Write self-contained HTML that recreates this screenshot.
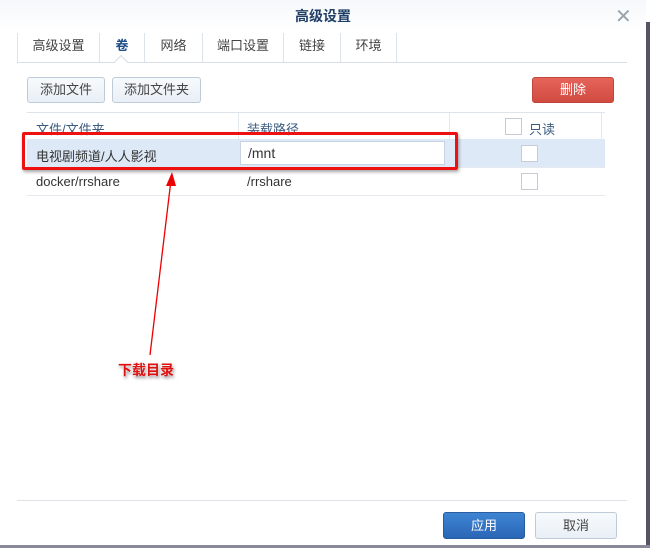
<!DOCTYPE html>
<html><head><meta charset="utf-8"><style>
*{margin:0;padding:0;box-sizing:border-box}
body{width:650px;height:548px;background:#fff;font-family:"Liberation Sans","Noto Sans CJK SC",sans-serif;font-size:13px;color:#333;position:relative;overflow:hidden}
.abs{position:absolute}
.title{left:0;top:0;width:646px;height:33px;background:linear-gradient(#f6f8fb,#fff);text-align:center;line-height:33px;color:#1f3f66;font-size:14px;font-weight:bold}
.tab{top:33px;height:30px;line-height:26px;color:#444;text-align:center;border-left:1px solid #dde3ea}
.btn{border:1px solid #bfcbd8;border-radius:3px;background:linear-gradient(#f7fafd,#e9eff6);text-align:center;line-height:24px;color:#444}
.hl{background:#dde9f6}
.cb{width:17px;height:17px;border:1px solid #c6ccd3;background:#fff}
</style></head><body>
<div class="abs title">高级设置</div>
<div class="abs" style="left:615px;top:4px;font-size:20px;color:#9aa4ad;font-weight:normal">✕</div>
<div class="abs" style="left:646px;top:22px;width:4px;height:526px;background:#556"></div>
<div class="abs" style="left:0;top:545px;width:650px;height:3px;background:#889"></div>
<div class="abs tab" style="left:17px;width:82px">高级设置</div>
<div class="abs tab" style="left:99px;width:45px;color:#1f4f88;font-weight:bold">卷</div>
<div class="abs tab" style="left:144px;width:58px">网络</div>
<div class="abs tab" style="left:202px;width:81px">端口设置</div>
<div class="abs tab" style="left:283px;width:57px">链接</div>
<div class="abs tab" style="left:340px;width:57px;border-right:1px solid #dde3ea">环境</div>
<div class="abs" style="left:17px;top:62px;width:610px;height:1px;background:#d6dde5"></div>
<div class="abs" style="left:116px;top:57px;width:10px;height:10px;background:#fff;border-left:1px solid #d6dde5;border-top:1px solid #d6dde5;transform:rotate(45deg)"></div>
<div class="abs btn" style="left:27px;top:77px;width:78px;height:26px">添加文件</div>
<div class="abs btn" style="left:112px;top:77px;width:89px;height:26px">添加文件夹</div>
<div class="abs" style="left:532px;top:77px;width:82px;height:26px;border-radius:3px;background:linear-gradient(#e5645a,#d14a40);border:1px solid #c0463c;color:#fff;text-align:center;line-height:24px">删除</div>
<div class="abs" style="left:27px;top:112px;width:578px;height:1px;background:#dfe4ea"></div>
<div class="abs" style="left:36px;top:119px;color:#3b5b80">文件/文件夹</div>
<div class="abs" style="left:238px;top:113px;width:1px;height:26px;background:#e3e8ed"></div>
<div class="abs" style="left:247px;top:119px;color:#3b5b80">装载路径</div>
<div class="abs" style="left:449px;top:113px;width:1px;height:26px;background:#e3e8ed"></div>
<div class="abs cb" style="left:505px;top:118px"></div>
<div class="abs" style="left:529px;top:119px;color:#3b5b80">只读</div>
<div class="abs" style="left:601px;top:113px;width:1px;height:26px;background:#e3e8ed"></div>
<div class="abs hl" style="left:27px;top:139px;width:578px;height:28px"></div>
<div class="abs" style="left:36px;top:146px">电视剧频道/人人影视</div>
<div class="abs" style="left:240px;top:141px;width:205px;height:24px;background:#fff;border:1px solid #c7d3e0;padding-left:7px;line-height:22px;font-size:14px">/mnt</div>
<div class="abs cb" style="left:521px;top:145px"></div>
<div class="abs" style="left:27px;top:167px;width:578px;height:1px;background:#e6eaee"></div>
<div class="abs" style="left:36px;top:174px">docker/rrshare</div>
<div class="abs" style="left:247px;top:174px">/rrshare</div>
<div class="abs cb" style="left:521px;top:173px"></div>
<div class="abs" style="left:27px;top:195px;width:578px;height:1px;background:#e6eaee"></div>
<div class="abs" style="left:22px;top:132px;width:436px;height:38px;border:3px solid #ee1111;border-radius:2px;box-shadow:1px 2px 3px rgba(0,0,0,.35)"></div>
<svg class="abs" style="left:0;top:0" width="650" height="548"><line x1="150" y1="355" x2="171" y2="180" stroke="#e00" stroke-width="1.3"/><polygon points="172,172 166,186 176,186" fill="#e00"/></svg>
<div class="abs" style="left:118px;top:360px;color:#e01010;font-weight:bold;font-size:14px;text-shadow:0 0 2px #fff,1px 2px 3px rgba(0,0,0,.5)">下载目录</div>
<div class="abs" style="left:17px;top:500px;width:610px;height:1px;background:#dfe3e7"></div>
<div class="abs" style="left:443px;top:512px;width:82px;height:27px;border-radius:3px;background:linear-gradient(#3e84d3,#2a66b6);border:1px solid #2a5d9e;color:#fff;text-align:center;line-height:25px">应用</div>
<div class="abs btn" style="left:535px;top:512px;width:82px;height:27px;line-height:25px">取消</div>
</body></html>
